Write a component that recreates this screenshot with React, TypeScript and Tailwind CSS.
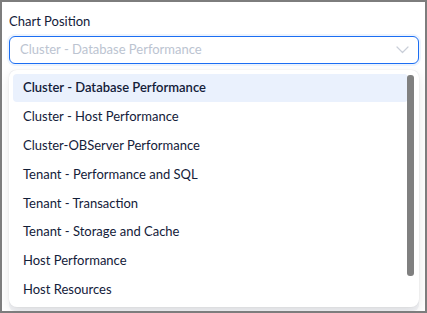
import React from "react";

const OPTIONS = [
  "Cluster - Database Performance",
  "Cluster - Host Performance",
  "Cluster-OBServer Performance",
  "Tenant - Performance and SQL",
  "Tenant - Transaction",
  "Tenant - Storage and Cache",
  "Host Performance",
  "Host Resources",
];

function Chevron() {
  return (
    <svg width="13" height="8" viewBox="0 0 13 8" fill="none" className="text-[#c9ced8]">
      <path d="M1 1l5.5 5.5L12 1" stroke="currentColor" strokeWidth="1.2" strokeLinecap="round" strokeLinejoin="round" />
    </svg>
  );
}

export default function App() {
  const selected = OPTIONS[0];

  return (
    <div
      className="h-[313px] w-[427px] overflow-hidden border-2 border-[#7d7d7d] bg-white text-[#132039]"
      style={{ fontFamily: 'Lato, "Noto Sans", sans-serif' }}
    >
      <div className="relative flex h-full flex-col pl-[7px] pr-[6px] pt-[10px]">
        <label className="text-[13px] leading-[18px] text-[#132039]">Chart Position</label>

        <button className="mt-[6px] flex h-[28px] w-[410px] items-center justify-between rounded-[6px] border border-[#1c6ef2] bg-white pl-[10px] pr-[9px] shadow-[0_0_0_2px_rgba(28,110,242,0.08)]">
          <span className="text-[13px] text-[#bcc4d1]">{selected}</span>
          <Chevron />
        </button>

        {/* page content that sits behind the open menu */}
        <div className="mt-[6px] flex flex-1 flex-col gap-[5px] rounded-[6px] bg-[#f3f4f7] px-[8px] pt-[14px]">
          <span className="self-end text-[12px] text-[#5a8fdc]">Performance</span>
          <div className="mt-[8px] h-px bg-[#d5dbe6]" />
          <div className="h-px bg-[#d5dbe6]" />
          <div className="mt-[30px] h-px bg-[#d5dbe6]" />
          <div className="mt-[3px] h-px bg-[#d5dbe6]" />
          <div className="mt-[24px] h-px bg-[#d5dbe6]" />
          <div className="mt-[24px] h-px bg-[#d5dbe6]" />
        </div>

        <div className="absolute left-[7px] top-[68px] w-[410px] rounded-[8px] bg-white px-[4px] pb-[3px] pt-[4px] shadow-[0_4px_12px_rgba(0,0,0,0.1),0_0_0_1px_rgba(0,0,0,0.02)]">
          <div className="relative flex flex-col gap-[0.85px] pr-[7px]">
            {OPTIONS.map((opt) => (
              <div
                key={opt}
                className={
                  opt === selected
                    ? "flex h-[28px] items-center rounded-[4px] bg-[#eaf1fd] px-[10px] text-[13px] font-semibold text-[#132039]"
                    : "flex h-[28px] items-center rounded-[4px] px-[10px] text-[13px] text-[#132039]"
                }
              >
                {opt}
              </div>
            ))}
            <div className="absolute right-[1px] top-[1px] h-[201px] w-[7px] rounded-[3px] bg-[#808080]" />
          </div>
        </div>
      </div>
    </div>
  );
}
